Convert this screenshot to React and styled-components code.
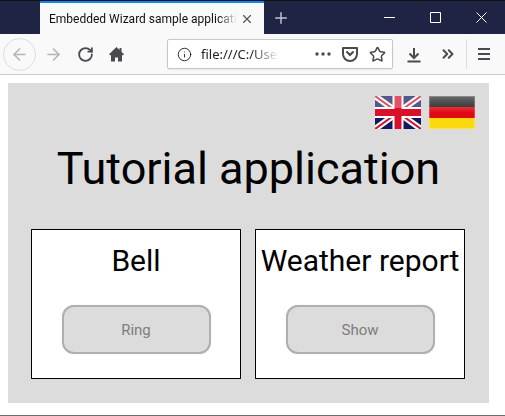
import React from "react";
import styled, { createGlobalStyle } from "styled-components";
import { ArrowLeft, ArrowRight, RotateCw, Info, Star, ChevronsRight, Plus, X } from "lucide-react";

const Global = createGlobalStyle`
  html, body { margin: 0; padding: 0; background: #fff; }
  body { font-family: Roboto, "Liberation Sans", sans-serif; }
`;

const Win = styled.div`
  width: 505px;
  height: 416px;
  display: flex;
  flex-direction: column;
  overflow: hidden;
  border-bottom: 1px solid #6e6e6e;
  box-sizing: border-box;
`;

const TitleBar = styled.div`
  height: 34px;
  background: #1f2344;
  display: flex;
  border-top: 1px solid #111;
  box-sizing: border-box;
  padding-left: 40px;
  color: #fff;
`;

const Tab = styled.div`
  width: 224px;
  background: #f9f9fa;
  border-top: 2px solid #0a84ff;
  display: flex;
  align-items: center;
  padding-left: 9px;
  box-sizing: border-box;
  color: #111;
  font: 12px Roboto, "Liberation Sans", sans-serif;
`;

const TabText = styled.span`
  width: 188px;
  white-space: nowrap;
  overflow: hidden;
  -webkit-mask-image: linear-gradient(to right, #000 90%, transparent);
  mask-image: linear-gradient(to right, #000 90%, transparent);
`;

const TabClose = styled.span`
  margin-left: 3px;
  display: flex;
  color: #555;
`;

const NewTab = styled.span`
  margin-left: 2px;
  width: 30px;
  display: flex;
  align-items: center;
  justify-content: center;
  color: #c0c2cc;
`;

const WinButtons = styled.div`
  margin-left: auto;
  margin-right: 1px;
  display: flex;
`;

const WinButton = styled.span`
  width: 46px;
  display: flex;
  align-items: center;
  justify-content: center;
`;

const NavBar = styled.div`
  height: 41px;
  background: #f9f9fa;
  border-bottom: 1px solid #ccc;
  box-sizing: border-box;
  display: flex;
  align-items: center;
  padding-left: 3px;
  color: #4a4a4f;
`;

const BackCircle = styled.span`
  width: 33px;
  height: 33px;
  border: 1px solid #ddd;
  border-radius: 50%;
  box-sizing: border-box;
  display: flex;
  align-items: center;
  justify-content: center;
  color: #b5b5b8;
`;

const NavIcon = styled.span`
  width: ${(p) => p.$w || 32}px;
  display: flex;
  justify-content: center;
  color: ${(p) => p.$color || "#4a4a4f"};
`;

const UrlBar = styled.div`
  width: 226px;
  height: 30px;
  margin-left: 34px;
  background: #fff;
  border: 1px solid #c8c8c8;
  border-radius: 2px;
  box-shadow: 0 1px 2px rgba(0, 0, 0, 0.08);
  box-sizing: border-box;
  display: flex;
  align-items: center;
  padding: 0 6px 0 9px;
  font: 13px "Noto Sans", "Liberation Sans", sans-serif;
  color: #222;
`;

const UrlText = styled.span`
  margin-left: 9px;
  width: 78px;
  white-space: nowrap;
  overflow: hidden;
  -webkit-mask-image: linear-gradient(to right, #000 65%, transparent);
  mask-image: linear-gradient(to right, #000 65%, transparent);
`;

const UrlIcons = styled.div`
  margin-left: auto;
  display: flex;
  align-items: center;
  gap: 10px;
  color: #4a4a4f;
`;

const Divider = styled.span`
  width: 1px;
  height: 30px;
  background: #ddd;
  margin: 0 10px 0 5px;
`;

const Page = styled.div`
  flex: 1;
  padding: 8px 16px 12px 8px;
  background: #fff;
`;

const Stage = styled.div`
  height: 320px;
  background: #dcdcdc;
  padding: 13px 14px 24px 23px;
  box-sizing: border-box;
  display: flex;
  flex-direction: column;
`;

const Flags = styled.div`
  display: flex;
  justify-content: flex-end;
  gap: 8px;
`;

const Flag = styled.svg`
  width: 46px;
  height: 33px;
  display: block;
`;

const Title = styled.h1`
  margin: 12px 0 0;
  font-size: 45px;
  font-weight: 400;
  line-height: 56px;
  text-align: center;
  color: #000;
  padding-right: 9px;
`;

const Cards = styled.div`
  margin-top: 32px;
  display: flex;
  gap: 14px;
`;

const Card = styled.div`
  width: 210px;
  height: 150px;
  background: #fff;
  border: 1px solid #000;
  box-sizing: border-box;
  display: flex;
  flex-direction: column;
  align-items: center;
`;

const CardTitle = styled.div`
  margin-top: 12px;
  font-size: 30px;
  line-height: 38px;
  white-space: nowrap;
  color: #000;
`;

const Btn = styled.div`
  margin-top: 25px;
  width: 149px;
  height: 49px;
  border: 2px solid #b0b0b0;
  border-radius: 12px;
  background: #dcdcdc;
  box-shadow: 0 0 1px #c8c8c8;
  box-sizing: border-box;
  display: flex;
  align-items: center;
  justify-content: center;
  font-size: 15px;
  color: #7d7d7d;
`;

const UkFlag = () => (
  <Flag viewBox="0 0 46 33">
    <rect width="46" height="33" fill="#14185f" />
    <path d="M0 0L46 33M46 0L0 33" stroke="#fff" strokeWidth="6" />
    <path d="M0 0L46 33M46 0L0 33" stroke="#d8102a" strokeWidth="2" />
    <path d="M23 0V33M0 16.5H46" stroke="#fff" strokeWidth="11" />
    <path d="M23 0V33M0 16.5H46" stroke="#d8102a" strokeWidth="7" />
    <rect width="46" height="12" fill="#fff" opacity="0.28" />
  </Flag>
);

const DeFlag = () => (
  <Flag viewBox="0 0 46 33">
    <defs>
      <linearGradient id="deBlack" x1="0" y1="0" x2="0" y2="1">
        <stop offset="0" stopColor="#6a6a6a" />
        <stop offset="1" stopColor="#3c3c3c" />
      </linearGradient>
      <linearGradient id="deRed" x1="0" y1="0" x2="0" y2="1">
        <stop offset="0" stopColor="#ea3038" />
        <stop offset="0.5" stopColor="#e00a14" />
        <stop offset="1" stopColor="#e00a14" />
      </linearGradient>
    </defs>
    <rect width="46" height="11" fill="url(#deBlack)" />
    <rect y="11" width="46" height="11" fill="url(#deRed)" />
    <rect y="22" width="46" height="11" fill="#fbd90f" />
    <rect x="0.5" y="0.5" width="45" height="32" fill="none" stroke="#fff" strokeOpacity="0.22" />
  </Flag>
);

const Pocket = () => (
  <svg width="18" height="18" viewBox="0 0 18 18" fill="none" stroke="currentColor" strokeWidth="2">
    <path d="M2 3h14v6a7 7 0 0 1-14 0z" strokeLinejoin="round" />
    <path d="M6 7l3 3 3-3" strokeLinecap="round" />
  </svg>
);

const HomeGlyph = () => (
  <svg width="17" height="17" viewBox="0 0 17 17" fill="currentColor">
    <path d="M8.5 1L1 8.2l1.2 1.2L3 8.6V15.5h4v-4h3v4h4V8.6l.8.8L16 8.2 13.5 5.8V2h-2v1.9z" />
  </svg>
);

const DownloadGlyph = () => (
  <svg width="16" height="17" viewBox="0 0 16 17" fill="none" stroke="currentColor" strokeWidth="2">
    <path d="M8 2v10M3.5 7.5L8 12l4.5-4.5M1.5 15.5h13" />
  </svg>
);

const MenuGlyph = () => (
  <svg width="14" height="14" viewBox="0 0 14 14" stroke="currentColor" strokeWidth="2">
    <path d="M1 2h12M1 7h12M1 12h12" />
  </svg>
);

const Dots = () => (
  <svg width="16" height="4" viewBox="0 0 16 4" fill="currentColor">
    <circle cx="2" cy="2" r="1.7" />
    <circle cx="8" cy="2" r="1.7" />
    <circle cx="14" cy="2" r="1.7" />
  </svg>
);

const Caption = ({ d }) => (
  <svg width="11" height="11" viewBox="0 0 11 11" fill="none" stroke="currentColor" strokeWidth="1">
    <path d={d} />
  </svg>
);

export default function App() {
  return (
    <Win>
      <Global />
      <TitleBar>
        <Tab>
          <TabText>Embedded Wizard sample application</TabText>
          <TabClose><X size={14} strokeWidth={2} /></TabClose>
        </Tab>
        <NewTab><Plus size={18} strokeWidth={2} /></NewTab>
        <WinButtons>
          <WinButton><Caption d="M0 5.5h11" /></WinButton>
          <WinButton><Caption d="M.5.5h10v10H.5z" /></WinButton>
          <WinButton><Caption d="M.5.5l10 10M10.5.5l-10 10" /></WinButton>
        </WinButtons>
      </TitleBar>
      <NavBar>
        <BackCircle><ArrowLeft size={19} /></BackCircle>
        <NavIcon $color="#b5b5b8" $w={34}><ArrowRight size={19} /></NavIcon>
        <NavIcon $w={30}><RotateCw size={17} strokeWidth={2.6} /></NavIcon>
        <NavIcon $w={33}><HomeGlyph /></NavIcon>
        <UrlBar>
          <Info size={15} strokeWidth={1.5} />
          <UrlText>file:///C:/Users</UrlText>
          <UrlIcons>
            <Dots />
            <Pocket />
            <Star size={17} strokeWidth={2.2} />
          </UrlIcons>
        </UrlBar>
        <NavIcon $w={41}><DownloadGlyph /></NavIcon>
        <NavIcon $w={27}><ChevronsRight size={18} strokeWidth={2.6} /></NavIcon>
        <Divider />
        <MenuGlyph />
      </NavBar>
      <Page>
        <Stage>
          <Flags>
            <UkFlag />
            <DeFlag />
          </Flags>
          <Title>Tutorial application</Title>
          <Cards>
            <Card>
              <CardTitle>Bell</CardTitle>
              <Btn>Ring</Btn>
            </Card>
            <Card>
              <CardTitle>Weather report</CardTitle>
              <Btn>Show</Btn>
            </Card>
          </Cards>
        </Stage>
      </Page>
    </Win>
  );
}
